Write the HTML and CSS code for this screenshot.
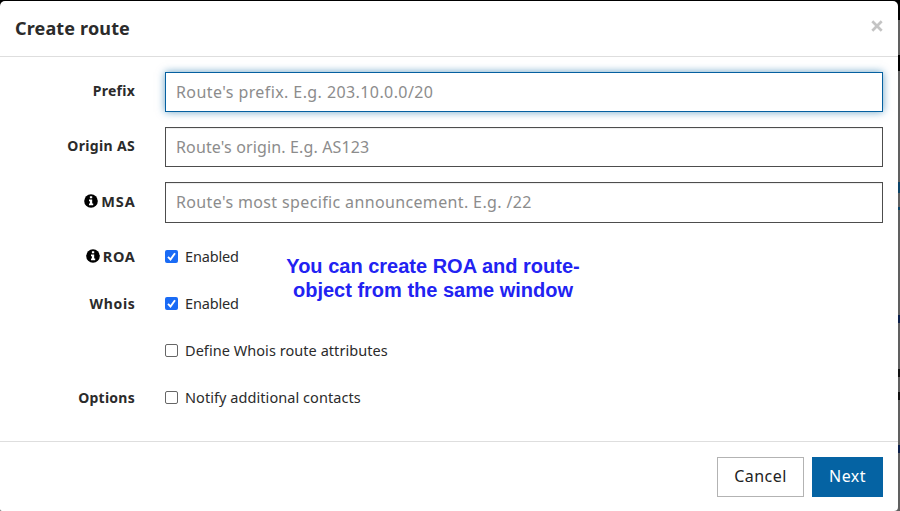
FILE: index.html
```html
<!DOCTYPE html>
<html lang="en">
<head>
<meta charset="utf-8">
<title>Create route</title>
<link rel="stylesheet" href="styles.css">
</head>
<body>
<svg class="sprite" width="0" height="0">
  <symbol id="info" viewBox="0 0 14 14">
    <circle cx="7" cy="7" r="6.8" fill="#000"/>
    <path fill="#fff" d="M5.9 2.3h2.3v2H5.9zM5 5.6h3.2v4h1v1.7H5V9.6h.9V7.2H5z"/>
  </symbol>
  <symbol id="tick" viewBox="0 0 13 13">
    <path d="M3 6.9l2.5 2.6L10 3.2" fill="none" stroke="#fff" stroke-width="1.9"/>
  </symbol>
</svg>
<div class="modal">
  <header class="modal-header">
    <h1 class="title">Create route</h1>
    <button class="close" aria-label="Close"><svg width="12" height="12" viewBox="0 0 12 12"><path d="M1.3 1.3l9.4 9.4M10.7 1.3L1.3 10.7" stroke="#c4c4c4" stroke-width="2.7"/></svg></button>
  </header>
  <form class="modal-body">
    <div class="field">
      <label class="name"><span class="t-prefix">Prefix</span></label>
      <input class="input focused p1" placeholder="Route's prefix. E.g. 203.10.0.0/20">
    </div>
    <div class="field">
      <label class="name"><span class="t-origin">Origin AS</span></label>
      <input class="input p2" placeholder="Route's origin. E.g. AS123">
    </div>
    <div class="field tall">
      <label class="name"><svg class="info"><use href="#info"/></svg><span class="t-msa">MSA</span></label>
      <input class="input p3" placeholder="Route's most specific announcement. E.g. /22">
    </div>
    <div class="check-row">
      <span class="name"><svg class="info"><use href="#info"/></svg><span class="t-roa">ROA</span></span>
      <label class="check"><span class="box on"><svg width="13" height="13"><use href="#tick"/></svg></span><span class="c-en">Enabled</span></label>
    </div>
    <div class="check-row">
      <span class="name"><span class="t-whois">Whois</span></span>
      <label class="check"><span class="box on"><svg width="13" height="13"><use href="#tick"/></svg></span><span class="c-en">Enabled</span></label>
    </div>
    <div class="check-row">
      <span class="name"></span>
      <label class="check"><span class="box"></span><span class="c-def">Define Whois route attributes</span></label>
    </div>
    <div class="check-row">
      <span class="name"><span class="t-options">Options</span></span>
      <label class="check"><span class="box"></span><span class="c-not">Notify additional contacts</span></label>
    </div>
  </form>
  <footer class="modal-footer">
    <button class="btn cancel"><span>Cancel</span></button>
    <button class="btn next"><span>Next</span></button>
  </footer>
  <p class="note">You can create ROA and route-<br>object from the same window</p>
</div>
</body>
</html>
```
FILE: styles.css
```css
* { box-sizing: border-box; }
body {
  margin: 0;
  height: 511px;
  padding-top: 1px;
  overflow: hidden;
  font-family: "Noto Sans", "Open Sans", sans-serif;
  color: #2b2b2b;
  background:
    linear-gradient(#0b1f4a, #0b1f4a) 100% 315px / 2px 8px no-repeat,
    linear-gradient(#0b1f4a, #0b1f4a) 100% 445px / 2px 8px no-repeat,
    linear-gradient(#0d4468, #0d4468) 100% 182px / 2px 11px no-repeat,
    linear-gradient(#0d4468, #0d4468) 100% 207px / 2px 3px no-repeat,
    linear-gradient(#111, #111) 100% 369px / 2px 8px no-repeat,
    linear-gradient(#111, #111) 100% 392px / 2px 8px no-repeat,
    linear-gradient(#000, #000) 100% 55px / 2px 16px no-repeat,
    linear-gradient(#000, #000) 0 0 / 100% 20px no-repeat,
    #606060;
}
.sprite { position: absolute; }
.modal {
  position: relative;
  width: 898px;
  height: 510px;
  background: #fff;
  border-radius: 5px 5px 4px 2px;
  display: flex;
  flex-direction: column;
}
.modal-header {
  height: 56px;
  padding: 0 15px;
  display: flex;
  align-items: center;
  justify-content: space-between;
  border-bottom: 1px solid #dedede;
}
.title { margin: -2px 0 0; font-size: 18px; line-height: 24px; letter-spacing: 0.15px; }
.close { border: 0; padding: 0; background: none; display: flex; margin: -5px 0 0; }
.modal-body { height: 384px; padding: 15px 15px 0 0; }
.field { height: 40px; margin-bottom: 15px; display: flex; }
.field.tall { height: 41px; margin-bottom: 10px; }
.name {
  width: 135px;
  margin-right: 30px;
  display: flex;
  justify-content: flex-end;
  align-items: center;
  gap: 3px;
  font-size: 14px;
  font-weight: 700;
  line-height: 20px;
}
.field .name { padding-bottom: 2px; }
.t-prefix { letter-spacing: 0.25px; }
.t-origin { letter-spacing: 0.33px; }
.t-msa, .t-roa { font-size: 14.5px; margin-top: -2px; }
.t-msa { letter-spacing: 0.9px; margin-right: -0.6px; }
.t-roa { letter-spacing: 0.6px; margin-right: -0.4px; }
.t-whois { letter-spacing: 0.7px; margin-right: -0.5px; }
.t-options { letter-spacing: 0.25px; }
.info { width: 14px; height: 14px; margin-top: -2px; }
.input {
  width: 718px;
  height: 100%;
  padding: 0 10px 1px;
  border: 1px solid #4d4d4d;
  border-radius: 0;
  outline: 0;
  font: 400 16px "Noto Sans", "Open Sans", sans-serif;
  background: #fff;
  box-shadow: inset 0 1px 1px rgba(0, 0, 0, .075);
}
.input::placeholder { color: #8c8c8c; opacity: 1; }
.p1 { padding-bottom: 0; letter-spacing: 0.41px; }
.p2 { padding-bottom: 0; letter-spacing: 0.14px; }
.p3 { letter-spacing: 0.36px; }
.focused { border-color: #0560a0; box-shadow: 0 0 8px rgba(5, 100, 160, .6); }
.check-row { height: 47px; display: flex; align-items: center; }
.check { display: flex; align-items: center; gap: 7px; font-size: 14.5px; line-height: 20px; white-space: nowrap; }
.check span:last-child { margin-top: -2px; }
.c-en { letter-spacing: -0.15px; }
.c-def { letter-spacing: 0.05px; }
.c-not { letter-spacing: 0.06px; }
.box { width: 13px; height: 13px; border: 1px solid #666; border-radius: 2px; }
.box.on { border: 0; background: #1a6bf5; }
.box svg { display: block; }
.modal-footer {
  flex: 1;
  border-top: 1px solid #dedede;
  padding: 15px 15px 0 0;
  display: flex;
  justify-content: flex-end;
  gap: 8px;
}
.btn { height: 40px; border: 0; padding: 0 0 3px; font: 400 16px "Noto Sans", "Open Sans", sans-serif; letter-spacing: 0.45px; }
.cancel { width: 87px; border: 1px solid #b3b3b3; background: #fff; color: #222; }
.next { width: 71px; background: #0563a3; color: #fff; }
.note {
  position: absolute;
  left: 283px;
  top: 253px;
  width: 300px;
  margin: 0;
  text-align: center;
  white-space: nowrap;
  font: 700 20px/24px "Liberation Sans", sans-serif;
  color: #2222f2;
}
```
